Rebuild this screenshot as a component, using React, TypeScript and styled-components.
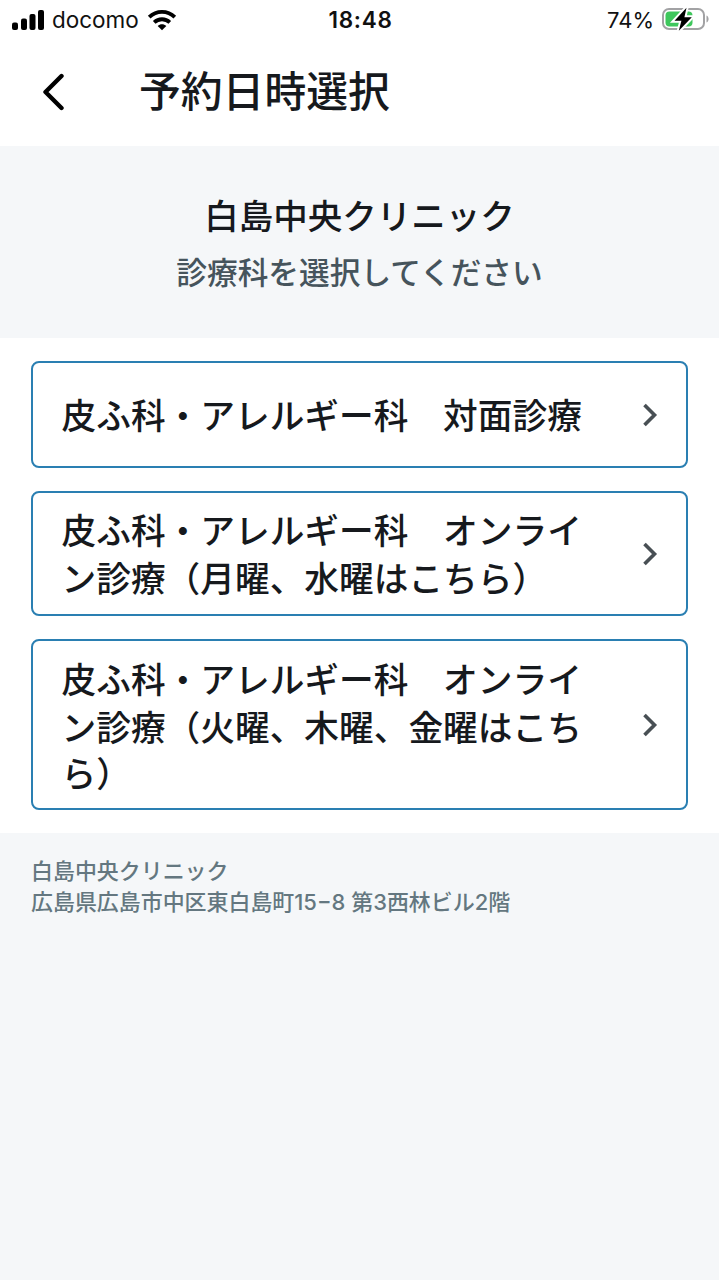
import styled, { createGlobalStyle } from 'styled-components';

const GlobalStyle = createGlobalStyle`
  * { box-sizing: border-box; }
  body {
    margin: 0;
    background: #f5f7f9;
    color: #16191d;
    font-family: "Noto Sans CJK JP", sans-serif;
  }
  h1, h2, p { margin: 0; font-weight: 500; }
`;

const Screen = styled.div`
  display: flex;
  flex-direction: column;
  width: 719px;
  min-height: 1280px;
  background: #f5f7f9;
`;

const StatusBar = styled.div`
  display: grid;
  grid-template-columns: 1fr auto 1fr;
  align-items: center;
  height: 40px;
  padding: 0 10px 0 12px;
  background: #fff;
  color: #111;
  font-family: Inter, sans-serif;
  font-size: 22px;
  line-height: 40px;
`;

const StatusGroup = styled.div<{ $end?: boolean }>`
  display: flex;
  align-items: center;
  justify-content: ${(p) => (p.$end ? 'flex-end' : 'flex-start')};
  gap: ${(p) => (p.$end ? 8 : 8)}px;
`;

const Carrier = styled.span`
  font-size: 22.5px;
`;

const Clock = styled.span`
  font-weight: 600;
  font-size: 22.5px;
  letter-spacing: 0.7px;
`;

const Header = styled.header`
  display: flex;
  align-items: center;
  height: 106px;
  padding: 0 0 2px 42px;
  background: #fff;
`;

const BackButton = styled.button`
  display: flex;
  width: 97px;
  padding: 0;
  border: 0;
  background: none;
`;

const Title = styled.h1`
  padding-bottom: 6px;
  font-size: 41.8px;
  line-height: 60px;
`;

const Intro = styled.section`
  height: 192px;
  padding-top: 42px;
  text-align: center;
`;

const ClinicName = styled.h2`
  font-size: 34.5px;
  line-height: 52px;
`;

const Prompt = styled.p`
  margin-top: 7px;
  color: #46545c;
  font-size: 30.7px;
  line-height: 48px;
`;

const DepartmentList = styled.main`
  display: flex;
  flex-direction: column;
  gap: 23px;
  padding: 23px 31px;
  background: #fff;
`;

const DepartmentCard = styled.button<{ $height: number }>`
  display: flex;
  align-items: center;
  justify-content: space-between;
  height: ${(p) => p.$height}px;
  padding: 0 28px 0 28.5px;
  border: 2px solid #2a7fb2;
  border-radius: 8px;
  background: #fff;
  color: inherit;
  font-family: inherit;
  text-align: left;
`;

const DepartmentName = styled.span`
  display: flex;
  flex-direction: column;
  padding-bottom: 2px;
  font-size: 34.7px;
  font-weight: 500;
  white-space: nowrap;
`;

const NameLine = styled.span`
  line-height: 48px;

  &:nth-child(3) {
    line-height: 44px;
  }
`;

const Footer = styled.footer`
  padding: 23px 31px;
  color: #647780;
  font-family: Inter, "Noto Sans CJK JP", sans-serif;
  font-size: 21.95px;
  font-weight: 500;
  line-height: 31px;
`;

const FooterLine = styled.p`
  white-space: nowrap;
`;

const SignalIcon = () => (
  <svg width="32" height="22" viewBox="0 0 32 22">
    <rect x="0" y="13.5" width="6" height="7.5" rx="2" />
    <rect x="9" y="9.5" width="6" height="11.5" rx="2" />
    <rect x="17.5" y="5" width="6" height="16" rx="2" />
    <rect x="26" y="1" width="6" height="20" rx="2" />
  </svg>
);

const WifiIcon = () => (
  <svg width="30" height="22" viewBox="0 0 30 22" fill="none" stroke="#000" strokeWidth="3.8">
    <path d="M2.2 8.2C9.4 1.2 20.6 1.2 27.8 8.2" />
    <path d="M7.2 13.3C11.6 9.2 18.4 9.2 22.8 13.3" />
    <path d="M15 21.2L10.7 17C13.1 14.7 16.9 14.7 19.3 17Z" fill="#000" stroke="none" />
  </svg>
);

const BatteryIcon = () => (
  <svg width="47" height="26" viewBox="0 0 47 26">
    <rect x="1" y="2" width="41" height="20" rx="6" fill="#fff" stroke="#a2a2a4" strokeWidth="2" />
    <path d="M44.5 8.5C47.3 9.6 47.3 14.4 44.5 15.5Z" fill="#a2a2a4" />
    <rect x="3.5" y="4.5" width="27" height="15" rx="4" fill="#3ec75c" />
    <path d="M24.5 0.8L12.5 13.8H19.4L16.8 23.8L29.8 10.3H22.4Z" fill="#000" stroke="#fff" strokeWidth="4" paintOrder="stroke" />
  </svg>
);

const BackIcon = () => (
  <svg width="24" height="38" viewBox="0 0 24 38" fill="none" stroke="#000" strokeWidth="4.4" strokeLinecap="round" strokeLinejoin="round">
    <path d="M19.5 3L3.5 19L19.5 35" />
  </svg>
);

const ChevronIcon = () => (
  <svg width="16" height="24" viewBox="0 0 16 24" fill="none" stroke="#484f54" strokeWidth="3.6">
    <path d="M2.5 2L12.5 12L2.5 22" />
  </svg>
);

const departments = [
  { height: 107, lines: ['皮ふ科・アレルギー科　対面診療'] },
  { height: 125, lines: ['皮ふ科・アレルギー科　オンライ', 'ン診療（月曜、水曜はこちら）'] },
  { height: 171, lines: ['皮ふ科・アレルギー科　オンライ', 'ン診療（火曜、木曜、金曜はこち', 'ら）'] },
];

export default function App() {
  return (
    <Screen>
      <GlobalStyle />
      <StatusBar>
        <StatusGroup>
          <SignalIcon />
          <Carrier>docomo</Carrier>
          <WifiIcon />
        </StatusGroup>
        <Clock>18:48</Clock>
        <StatusGroup $end>
          <span>74%</span>
          <BatteryIcon />
        </StatusGroup>
      </StatusBar>
      <Header>
        <BackButton aria-label="戻る">
          <BackIcon />
        </BackButton>
        <Title>予約日時選択</Title>
      </Header>
      <Intro>
        <ClinicName>白島中央クリニック</ClinicName>
        <Prompt>診療科を選択してください</Prompt>
      </Intro>
      <DepartmentList>
        {departments.map((d) => (
          <DepartmentCard key={d.lines.join('')} $height={d.height}>
            <DepartmentName>
              {d.lines.map((line) => (
                <NameLine key={line}>{line}</NameLine>
              ))}
            </DepartmentName>
            <ChevronIcon />
          </DepartmentCard>
        ))}
      </DepartmentList>
      <Footer>
        <FooterLine>白島中央クリニック</FooterLine>
        <FooterLine>広島県広島市中区東白島町15−8 第3西林ビル2階</FooterLine>
      </Footer>
    </Screen>
  );
}
